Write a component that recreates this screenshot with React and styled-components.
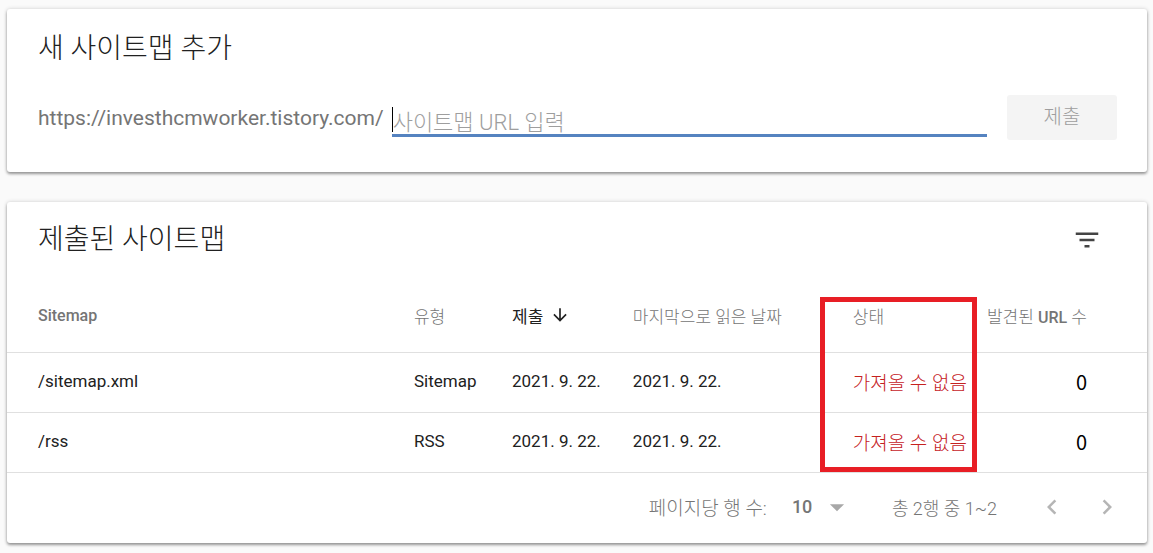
import React, { useState } from "react";
import styled, { createGlobalStyle } from "styled-components";
import {
  MdArrowDownward,
  MdArrowDropDown,
  MdChevronLeft,
  MdChevronRight,
  MdFilterList,
} from "react-icons/md";

const sitemaps = [
  { path: "/sitemap.xml", type: "Sitemap", submitted: "2021. 9. 22.", lastRead: "2021. 9. 22.", status: "가져올 수 없음", urls: 0 },
  { path: "/rss", type: "RSS", submitted: "2021. 9. 22.", lastRead: "2021. 9. 22.", status: "가져올 수 없음", urls: 0 },
];

const App = () => {
  const [url, setUrl] = useState("");

  return (
    <Page>
      <GlobalStyle />
      <Card>
        <AddForm onSubmit={(e) => e.preventDefault()}>
          <Title>새 사이트맵 추가</Title>
          <FormRow>
            <Prefix htmlFor="sitemap-url">https://investhcmworker.tistory.com/</Prefix>
            <Field>
              {!url && <Caret />}
              <UrlInput
                id="sitemap-url"
                type="text"
                placeholder="사이트맵 URL 입력"
                value={url}
                onChange={(e) => setUrl(e.target.value)}
              />
            </Field>
            <Submit type="submit" disabled={!url}>
              제출
            </Submit>
          </FormRow>
        </AddForm>
      </Card>

      <Card>
        <CardHeader>
          <Title>제출된 사이트맵</Title>
          <IconButton type="button" aria-label="필터" $color="#444">
            <MdFilterList size={30} />
          </IconButton>
        </CardHeader>
        <Table>
          <thead>
            <tr>
              <HeadCell $width="35.7%" $latin>Sitemap</HeadCell>
              <HeadCell $width="8.6%">유형</HeadCell>
              <HeadCell $width="10.6%" $active>
                <SortButton type="button">
                  제출
                  <MdArrowDownward size={20} />
                </SortButton>
              </HeadCell>
              <HeadCell $width="16.4%">마지막으로 읽은 날짜</HeadCell>
              <StatusHead $width="13.8%">
                상태
                <Highlight />
              </StatusHead>
              <HeadCell $width="14.9%" $end>
                발견된 <b>URL</b> 수
              </HeadCell>
            </tr>
          </thead>
          <tbody>
            {sitemaps.map((item) => (
              <tr key={item.path}>
                <Cell>{item.path}</Cell>
                <Cell>{item.type}</Cell>
                <Cell>{item.submitted}</Cell>
                <Cell>{item.lastRead}</Cell>
                <StatusCell>{item.status}</StatusCell>
                <CountCell>{item.urls}</CountCell>
              </tr>
            ))}
          </tbody>
        </Table>
        <Footer>
          <FooterLabel htmlFor="page-size">페이지당 행 수:</FooterLabel>
          <SelectBox>
            <PageSize id="page-size" defaultValue="10">
              <option>10</option>
              <option>25</option>
              <option>50</option>
            </PageSize>
            <MdArrowDropDown size={34} />
          </SelectBox>
          <Range>총 2행 중 1~2</Range>
          <Pager>
            <IconButton type="button" aria-label="이전 페이지" $color="#b5b5b5">
              <MdChevronLeft size={30} />
            </IconButton>
            <IconButton type="button" aria-label="다음 페이지" $color="#b5b5b5">
              <MdChevronRight size={30} />
            </IconButton>
          </Pager>
        </Footer>
      </Card>
    </Page>
  );
};

const GlobalStyle = createGlobalStyle`
  * {
    box-sizing: border-box;
  }

  body {
    margin: 0;
    background: #fafafa;
    color: #212121;
    font-family: Roboto, "Noto Sans CJK KR", sans-serif;
  }

  button,
  input,
  select {
    font-family: inherit;
  }
`;

const Page = styled.main`
  display: flex;
  flex-direction: column;
  gap: 30px;
  padding: 9px 6px 8px 7px;
`;

const Card = styled.section`
  background: #fff;
  border-radius: 3px;
  box-shadow: 0 2px 3px rgba(0, 0, 0, 0.36), 0 0 4px rgba(0, 0, 0, 0.16);
`;

const Title = styled.h2`
  margin: 0;
  font-size: 28px;
  font-weight: 300;
  line-height: 30px;
`;

const AddForm = styled.form`
  display: flex;
  flex-direction: column;
  gap: 31px;
  padding: 25px 30px 32px 31px;
`;

const FormRow = styled.div`
  display: flex;
  align-items: center;
`;

const Prefix = styled.label`
  font-size: 21px;
  color: #757575;
  margin-right: 8px;
`;

const Field = styled.div`
  position: relative;
  flex: 1;
  align-self: flex-end;
  margin: 0 20px 3px 0;
`;

const Caret = styled.span`
  position: absolute;
  left: 0;
  top: 0;
  width: 1px;
  height: 25px;
  background: #000;
`;

const UrlInput = styled.input`
  display: block;
  width: 100%;
  height: 30px;
  padding: 3px 1px 0;
  border: 0;
  border-bottom: 3px solid #5583c0;
  outline: none;
  background: transparent;
  font-size: 22px;
  font-weight: 300;
  line-height: 24px;
  color: #212121;

  &::placeholder {
    color: #9e9e9e;
    opacity: 1;
  }
`;

const Submit = styled.button`
  width: 110px;
  height: 45px;
  padding: 0 0 4px;
  border: 0;
  border-radius: 3px;
  background: #f4f4f4;
  font-size: 20px;
  font-weight: 300;
  color: #9e9e9e;
`;

const CardHeader = styled.header`
  display: flex;
  align-items: center;
  justify-content: space-between;
  height: 78px;
  padding: 0 45px 2px 31px;
`;

const IconButton = styled.button`
  display: flex;
  padding: 0;
  border: 0;
  background: none;
  color: ${(props) => props.$color};
`;

const Table = styled.table`
  width: 100%;
  table-layout: fixed;
  border-collapse: collapse;

  tr {
    border-bottom: 1px solid #e0e0e0;
  }

  th:first-child,
  td:first-child {
    padding-left: 31px;
  }
`;

const HeadCell = styled.th`
  width: ${(props) => props.$width};
  height: 72px;
  padding: 0 ${(props) => (props.$end ? "60px" : "0")} 1px 0;
  font-size: ${(props) => (props.$latin ? "16px" : "17px")};
  font-weight: ${(props) => (props.$latin ? 500 : 300)};
  text-align: ${(props) => (props.$end ? "right" : "left")};
  white-space: nowrap;
  color: ${(props) => (props.$active ? "#212121" : "#757575")};

  b {
    font-size: 16px;
    font-weight: 500;
  }
`;

const StatusHead = styled(HeadCell)`
  position: relative;
  padding-left: 33px;
`;

// frame around the whole status column
const Highlight = styled.span`
  position: absolute;
  top: 17px;
  left: 0;
  right: 0;
  height: 175px;
  border: 5px solid #e81e25;
  pointer-events: none;
`;

const SortButton = styled.button`
  display: flex;
  align-items: center;
  gap: 7px;
  padding: 0;
  border: 0;
  background: none;
  font-size: 17px;
  font-weight: 400;
  color: inherit;
`;

const Cell = styled.td`
  height: 60px;
  padding: 0 0 2px;
  font-size: 17px;
  white-space: nowrap;
`;

const StatusCell = styled(Cell)`
  padding-left: 33px;
  font-size: 19px;
  font-weight: 300;
  color: #c5221f;
`;

const CountCell = styled(Cell)`
  padding-right: 60px;
  font-family: "Noto Sans CJK KR", sans-serif;
  font-size: 20px;
  text-align: right;
  color: #000;
`;

const Footer = styled.footer`
  display: flex;
  align-items: center;
  justify-content: flex-end;
  height: 70px;
  padding: 0 25px 2px 0;
  font-size: 19px;
  font-weight: 300;
  color: #757575;
`;

const FooterLabel = styled.label`
  margin-right: 25px;
`;

const SelectBox = styled.div`
  position: relative;
  display: flex;
  align-items: center;
  width: 62px;
  margin-right: 38px;

  svg {
    position: absolute;
    right: 0;
    color: #a8a8a8;
    pointer-events: none;
  }
`;

const PageSize = styled.select`
  width: 100%;
  padding: 0;
  border: 0;
  appearance: none;
  background: none;
  font-size: 18px;
  font-weight: 500;
  color: #757575;
`;

const Range = styled.span`
  margin-right: 40px;
  font-size: 18px;
`;

const Pager = styled.div`
  display: flex;
  gap: 25px;
`;

export default App;
